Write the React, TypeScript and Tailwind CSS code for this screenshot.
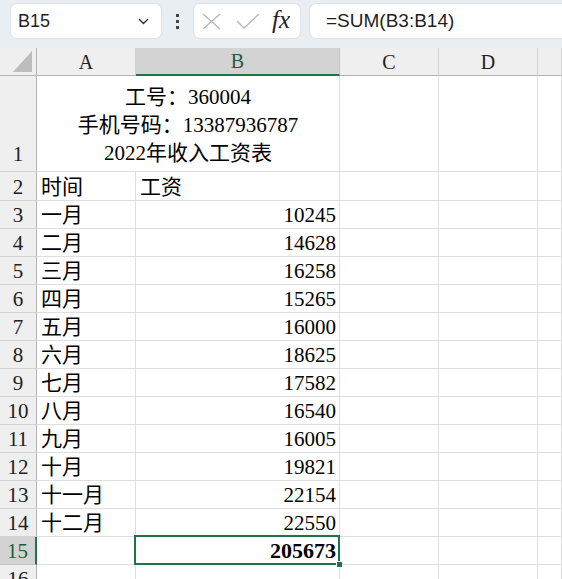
import React from "react";

const CELL_FONT = { fontFamily: '"Liberation Serif", "Noto Sans CJK SC", serif' };
const UI_FONT = { fontFamily: '"Liberation Sans", "Noto Sans CJK SC", sans-serif' };

const rows: [string, string][] = [
  ["一月", "10245"],
  ["二月", "14628"],
  ["三月", "16258"],
  ["四月", "15265"],
  ["五月", "16000"],
  ["六月", "18625"],
  ["七月", "17582"],
  ["八月", "16540"],
  ["九月", "16005"],
  ["十月", "19821"],
  ["十一月", "22154"],
  ["十二月", "22550"],
];

/**
 * Name box + formula bar
 */
const FormulaBar: React.FC = () => (
  <div className="h-[48px] bg-[#e9eef2] flex items-start pt-[3px] pl-[10px] gap-0" style={UI_FONT}>
    <div className="w-[152px] h-[36px] bg-white border border-[#dde2e6] rounded-[7px] flex items-center pl-[7px] pr-[12px]">
      <span className="flex-1 text-[18px] text-[#1f1f1f]">B15</span>
      <svg width="11" height="7" viewBox="0 0 11 7" fill="none">
        <path d="M1 1l4.5 4.5L10 1" stroke="#333" strokeWidth="1.4" />
      </svg>
    </div>
    <div className="w-[31px] h-[36px] flex flex-col items-center justify-center gap-[3px]">
      <span className="w-[3px] h-[3px] bg-[#444]" />
      <span className="w-[3px] h-[3px] bg-[#444]" />
      <span className="w-[3px] h-[3px] bg-[#444]" />
    </div>
    <div className="w-[108px] h-[36px] bg-white border border-[#dde2e6] rounded-[7px] flex items-center pl-[7px]">
      <svg width="19" height="17" viewBox="0 0 19 17" fill="none" className="ml-[1px]">
        <path d="M1 1l17 15M18 1L1 16" stroke="#b5b5b5" strokeWidth="1.3" />
      </svg>
      <svg width="24" height="16" viewBox="0 0 24 16" fill="none" className="ml-[15px]">
        <path d="M1 8l7 7L23 1" stroke="#b5b5b5" strokeWidth="1.3" />
      </svg>
      <span
        className="ml-[12px] text-[25px] italic text-[#222] leading-none -mt-[3px]"
        style={{ fontFamily: '"Liberation Serif", serif' }}
      >
        fx
      </span>
    </div>
    <div className="ml-[8px] flex-1 h-[36px] bg-white border border-[#dde2e6] rounded-l-[7px] border-r-0 flex items-center pl-[16px]">
      <span className="text-[19px] text-[#1f1f1f]">=SUM(B3:B14)</span>
    </div>
  </div>
);

const cellBase = "border-r border-b border-[#dedede] bg-white";

export default function App() {
  return (
    <div className="w-[562px] h-[579px] overflow-hidden bg-white">
      <FormulaBar />
      <div className="grid grid-cols-[37px_99px_204px_99px_99px_1fr]" style={CELL_FONT}>
        {/* Column header row */}
        <div className="h-[28px] bg-[#efefef] border-r border-b border-[#b4b4b4] flex items-end justify-end pr-[4px] pb-[3px]">
          <svg width="19" height="21" viewBox="0 0 19 21">
            <path d="M19 0V21H0Z" fill="#bdbdbd" />
          </svg>
        </div>
        {["A", "B", "C", "D", ""].map((c) => (
          <div
            key={c || "E"}
            className={
              c === "B"
                ? "h-[28px] bg-[#d3d3d3] border-r border-[#c4c4c4] border-b-2 border-b-[#217346] flex items-center justify-center text-[20px] text-[#1d5e3a]"
                : "h-[28px] bg-[#efefef] border-r border-[#d2d2d2] border-b border-b-[#b4b4b4] flex items-center justify-center text-[20px] text-[#222]"
            }
          >
            {c}
          </div>
        ))}

        {/* Row 1 */}
        <div className="h-[96px] bg-[#efefef] border-r border-r-[#b4b4b4] border-b border-[#d2d2d2] flex items-end justify-center text-[21px] text-[#222] pb-[1px]">
          1
        </div>
        <div className={`${cellBase} col-span-2 h-[96px] flex flex-col items-center justify-end pb-[4px] text-[21px] leading-[28px] text-black`}>
          <div>工号：360004</div>
          <div>手机号码：13387936787</div>
          <div>2022年收入工资表</div>
        </div>
        <div className={`${cellBase} h-[96px]`} />
        <div className={`${cellBase} h-[96px]`} />
        <div className={`${cellBase} h-[96px]`} />

        {/* Row 2 */}
        <div className="h-[29px] bg-[#efefef] border-r border-r-[#b4b4b4] border-b border-[#d2d2d2] flex items-end justify-center text-[21px] leading-[26px] text-[#222]">
          2
        </div>
        <div className={`${cellBase} h-[29px] flex items-end pl-[4px] text-[21px] leading-[26px]`}>时间</div>
        <div className={`${cellBase} h-[29px] flex items-end pl-[4px] text-[21px] leading-[26px]`}>工资</div>
        <div className={`${cellBase} h-[29px]`} />
        <div className={`${cellBase} h-[29px]`} />
        <div className={`${cellBase} h-[29px]`} />

        {rows.map(([m, v], i) => (
          <React.Fragment key={m}>
            <div className="h-[28px] bg-[#efefef] border-r border-r-[#b4b4b4] border-b border-[#d2d2d2] flex items-end justify-center text-[21px] leading-[26px] text-[#222]">
              {i + 3}
            </div>
            <div className={`${cellBase} h-[28px] flex items-end pl-[4px] text-[21px] leading-[26px]`}>{m}</div>
            <div className={`${cellBase} h-[28px] flex items-end justify-end pr-[3px] text-[21px] leading-[26px]`}>{v}</div>
            <div className={`${cellBase} h-[28px]`} />
            <div className={`${cellBase} h-[28px]`} />
            <div className={`${cellBase} h-[28px]`} />
          </React.Fragment>
        ))}

        {/* Row 15 - selected */}
        <div className="h-[28px] bg-[#d3d3d3] border-r-2 border-r-[#217346] border-b border-[#c4c4c4] flex items-end justify-center text-[21px] leading-[26px] text-[#1d5e3a]">
          15
        </div>
        <div className={`${cellBase} h-[28px]`} />
        <div className={`${cellBase} h-[28px] relative flex items-end justify-end pr-[3px] text-[22px] leading-[26px] font-bold`}>
          205673
          <div className="absolute -left-[2px] -top-[2px] -right-[1px] -bottom-[1px] border-2 border-[#217346] pointer-events-none" />
          <div className="absolute -right-[4px] -bottom-[4px] w-[7px] h-[7px] bg-[#217346] border border-white" />
        </div>
        <div className={`${cellBase} h-[28px]`} />
        <div className={`${cellBase} h-[28px]`} />
        <div className={`${cellBase} h-[28px]`} />

        {/* Row 16 */}
        <div className="h-[28px] bg-[#efefef] border-r border-r-[#b4b4b4] border-b border-[#d2d2d2] flex items-end justify-center text-[21px] leading-[26px] text-[#222]">
          16
        </div>
        <div className={`${cellBase} h-[28px]`} />
        <div className={`${cellBase} h-[28px]`} />
        <div className={`${cellBase} h-[28px]`} />
        <div className={`${cellBase} h-[28px]`} />
        <div className={`${cellBase} h-[28px]`} />
      </div>
    </div>
  );
}
